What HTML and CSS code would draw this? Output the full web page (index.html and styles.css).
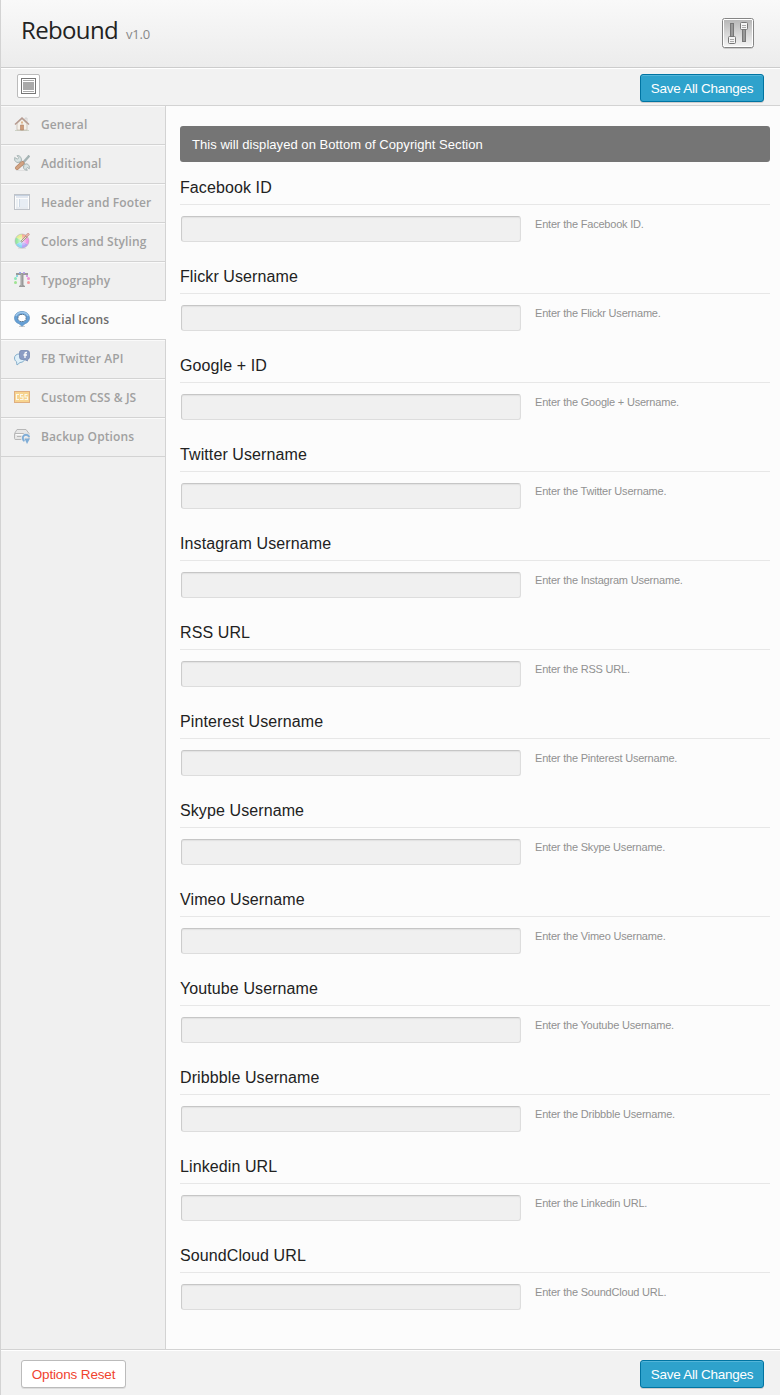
FILE: index.html
```html
<!DOCTYPE html>
<html lang="en">
<head>
<meta charset="utf-8">
<title>Rebound Options</title>
<link rel="stylesheet" href="styles.css">
</head>
<body>
<div class="panel">
  <header class="header">
    <h1 class="title">Rebound</h1><span class="version">v1.0</span>
    <svg class="sliders" width="32" height="32" viewBox="0 0 32 32">
      <defs>
        <linearGradient id="metal" x1="0" y1="0" x2="0" y2="1"><stop offset="0" stop-color="#b8b8b8"/><stop offset="1" stop-color="#f3f3f3"/></linearGradient>
      </defs>
      <rect x="1" y="2" width="30" height="29" rx="2" fill="#ccc"/>
      <rect x=".5" y=".5" width="31" height="29" rx="2" fill="#fff" stroke="#858585"/>
      <rect x="2" y="2" width="28" height="26" fill="url(#metal)"/>
      <rect x="8.500" y="5.500" width="3" height="14" fill="#999" stroke="#777"/>
      <rect x="6.500" y="18.500" width="7" height="7" rx="1" fill="#f4f4f4" stroke="#777"/>
      <path d="M8 21.500h4M8 23.500h4" stroke="#aaa"/>
      <rect x="20.500" y="10.500" width="3" height="13" fill="#999" stroke="#777"/>
      <rect x="18.500" y="4.500" width="7" height="7" rx="1" fill="#f4f4f4" stroke="#777"/>
      <path d="M20 7.500h4M20 9.500h4" stroke="#aaa"/>
    </svg>
  </header>
  <div class="toolbar">
    <a class="expand"><svg width="15" height="16" viewBox="0 0 15 16"><rect x=".5" y=".5" width="14" height="15" fill="#fff" stroke="#777"/><path d="M2 2.500h11M2 13.500h11" stroke="#aaa"/><rect x="2" y="4" width="11" height="8" fill="#aaa"/></svg></a>
    <button class="btn primary">Save All Changes</button>
  </div>
  <div class="main">
    <nav class="nav">
      <a class="item"><svg class="icon" viewBox="0 0 16 16"><path d="M1 14.500h14" stroke="#c5ccbd"/><path d="M3 7.500 8 3l5 4.500V14H3z" fill="#f7f1e8" stroke="#b9a99b" stroke-width=".7"/><path d="M11 2h2v4h-2z" fill="#eee" stroke="#aaa" stroke-width=".5"/><path d="M1 8.500 8 2l7 6.500" fill="none" stroke="#a88577" stroke-width="1.500"/><path d="M6.500 9h3v5h-3z" fill="#c78859" stroke="#9d6546" stroke-width=".6"/><path d="M7 5.500h2v2H7z" fill="#d9aa78"/></svg><span>General</span></a>
      <a class="item"><svg class="icon" viewBox="0 0 16 16"><path d="M2 15.500h11" stroke="#ddd"/><path d="m5 5 7 7" stroke="#8fa0a0" stroke-width="3.500"/><path d="m5 5 7 7" stroke="#dae5e3" stroke-width="2"/><path d="M.7 2.500v3L3 7.500l3-.5 1.500-1.800L7 2.500 5 .7H3l1.800 2-1.300 1.500zM10 9.500l3-.7 2.300 2v3l-2-1.300-1 1 1 1.800-2.500-.6L9.500 13z" fill="#d4e0df" stroke="#8fa0a0" stroke-width=".9"/><path d="m9 7 4.500-5 1-1.500 1 1-1.500 1.500L9.500 8" fill="#dce5e5" stroke="#93a5a6" stroke-width="1.200"/><path d="m3 13 5.500-5" stroke="#a96e48" stroke-width="4" stroke-linecap="round"/><path d="m3 13 5.500-5" stroke="#cb9168" stroke-width="2.500" stroke-linecap="round"/></svg><span>Additional</span></a>
      <a class="item"><svg class="icon" viewBox="0 0 16 16"><rect x=".5" y=".5" width="15" height="15" fill="#fff" stroke="#b3b8c0"/><path d="M1 1.500h14" stroke="#b9c8da"/><path d="M2 2h12v2H2z" fill="#dfe6ef"/><path d="M2 5h2v8H2z" fill="#eaf0f6"/><path d="M5.500 5v8" stroke="#c4d1e0"/><path d="M6 5h8v8H6z" fill="#e6edf5"/><path d="M2 14h12" stroke="#ccd6e2"/></svg><span>Header and Footer</span></a>
      <a class="item"><svg class="icon" viewBox="0 0 16 16"><path d="M4 15.500h8" stroke="#ddd"/><g><path d="M8 8V1A7 7 0 0 0 2 4.500z" fill="#e3f07c"/><path d="M8 8 2 4.500a7 7 0 0 0 0 7z" fill="#7fe88e"/><path d="m8 8-6 3.500A7 7 0 0 0 8 15z" fill="#72d4f5"/><path d="M8 8v7a7 7 0 0 0 6-3.500z" fill="#a792fa"/><path d="m8 8 6 3.500A7 7 0 0 0 14 4.500z" fill="#f27fe0"/><path d="m8 8 6-3.500A7 7 0 0 0 8 1z" fill="#fba283"/></g><circle cx="8" cy="8" r="4.500" fill="#fff" opacity=".25"/><circle cx="8" cy="8" r="2.500" fill="#fff" opacity=".4"/><circle cx="8" cy="8" r="7" fill="none" stroke="#999ba5" stroke-width=".5"/><path d="m7 9 6-6" stroke="#777" stroke-width="1.800"/><path d="m7.500 8.500 5-5" stroke="#f8e9b4"/><path d="m12 3.500 3-3" stroke="#c98277" stroke-width="2.500"/><path d="m12.500 3 2-2" stroke="#f5c8bb"/></svg><span>Colors and Styling</span></a>
      <a class="item"><svg class="icon" viewBox="0 0 16 16"><path d="M2 1h12v3h-1l-1-1H9.500v10l1.500 1v1H5v-1l1.500-1V3H4L3 4H2z" fill="#858585"/><path d="M7.500 2v12" stroke="#999"/><path d="M5 0h2v1.500H5z" fill="#7f95ef"/><path d="M9 0h2v1.500H9z" fill="#b08fee"/><path d="M2 3h2v2H2z" fill="#76cfe0"/><circle cx="1.500" cy="6.500" r="1.500" fill="#78e4ad"/><circle cx="1.500" cy="10.500" r="1.500" fill="#8be27a"/><path d="M12 3h2v2h-2z" fill="#cc8be4"/><circle cx="14.500" cy="6.500" r="1.500" fill="#f07fc6"/><circle cx="14.500" cy="10.500" r="1.500" fill="#f98585"/></svg><span>Typography</span></a>
      <a class="item active"><svg class="icon" viewBox="0 0 16 16"><path d="M5 15.500h6" stroke="#ccc"/><path d="M8 .5C4 .5.500 3.200.500 7c0 3 2 5 4.500 5.700L8 15.300l3-2.600c2.500-.7 4.500-2.700 4.500-5.700C15.500 3.200 12 .5 8 .5z" fill="#659fd5" stroke="#5b8fbd" stroke-width=".7"/><path d="M2 5C3 2.500 5.200 1.500 8 1.500s5 1 6 3.500" fill="none" stroke="#9dc6e9" stroke-width="1.500"/><path d="M6 3.500h4l2 2v3l-2 2H6l-2-2v-3z" fill="#fff" stroke="#60798f" stroke-width="1" stroke-dasharray="2 .6"/></svg><span>Social Icons</span></a>
      <a class="item"><svg class="icon" viewBox="0 0 16 16"><path d="M5 4C2.500 4 .5 5.700.5 8c0 1.600.8 3 2 3.700L3 15l3-2.500c3 0 5-2 5-4.500S8.500 4 5 4z" fill="#dcf1fc" stroke="#6c9fc3"/><path d="M7 .5h6Q15.500.5 15.500 3v4q0 2-2 2.500V11l-3-1.500H8Q5.500 9.500 5.500 7V3Q5.500.5 7 .5z" fill="#7288b8" stroke="#5971a4" stroke-width=".8"/><path d="M13 2.500h-1q-1 0-1 1V8M9.500 5h3.500" fill="none" stroke="#fff" stroke-width="1.300"/></svg><span>FB Twitter API</span></a>
      <a class="item"><svg class="icon" viewBox="0 0 16 16"><rect x=".5" y="2.500" width="15" height="11" fill="#f9ce78" stroke="#dc9e65"/><path d="M5 5.500H2.500v5H5M9 5.500H6.500V8H9v2.500H6M13.500 5.500H11V8h2.500v2.500h-3" fill="none" stroke="#fffbea" stroke-width="1.100"/></svg><span>Custom CSS &amp; JS</span></a>
      <a class="item"><svg class="icon" viewBox="0 0 16 16"><path d="M3 1.500h9l3 4v5q0 1-1 1H2q-1.500 0-1.500-1V5.500z" fill="#e6e6e6" stroke="#aaa"/><path d="M1 5.500h13M3 8.500h6" stroke="#aaa"/><path d="M2 6.500h11" stroke="#fff"/><path d="M10.500 13A3.300 3.300 0 1 1 15.200 9" fill="none" stroke="#f0f0f0" stroke-width="3.500"/><path d="M10.500 13A3.300 3.300 0 1 1 15.200 9" fill="none" stroke="#659dd0" stroke-width="2"/><path d="M10.500 10.500H16L13 16z" fill="#659dd0"/></svg><span>Backup Options</span></a>
    </nav>
    <main class="content">
      <div class="info">This will displayed on Bottom of Copyright Section</div>
      <section class="field"><h2>Facebook ID</h2><div class="row"><input type="text"><p>Enter the Facebook ID.</p></div></section>
      <section class="field"><h2>Flickr Username</h2><div class="row"><input type="text"><p>Enter the Flickr Username.</p></div></section>
      <section class="field"><h2>Google + ID</h2><div class="row"><input type="text"><p>Enter the Google + Username.</p></div></section>
      <section class="field"><h2>Twitter Username</h2><div class="row"><input type="text"><p>Enter the Twitter Username.</p></div></section>
      <section class="field"><h2>Instagram Username</h2><div class="row"><input type="text"><p>Enter the Instagram Username.</p></div></section>
      <section class="field"><h2>RSS URL</h2><div class="row"><input type="text"><p>Enter the RSS URL.</p></div></section>
      <section class="field"><h2>Pinterest Username</h2><div class="row"><input type="text"><p>Enter the Pinterest Username.</p></div></section>
      <section class="field"><h2>Skype Username</h2><div class="row"><input type="text"><p>Enter the Skype Username.</p></div></section>
      <section class="field"><h2>Vimeo Username</h2><div class="row"><input type="text"><p>Enter the Vimeo Username.</p></div></section>
      <section class="field"><h2>Youtube Username</h2><div class="row"><input type="text"><p>Enter the Youtube Username.</p></div></section>
      <section class="field"><h2>Dribbble Username</h2><div class="row"><input type="text"><p>Enter the Dribbble Username.</p></div></section>
      <section class="field"><h2>Linkedin URL</h2><div class="row"><input type="text"><p>Enter the Linkedin URL.</p></div></section>
      <section class="field"><h2>SoundCloud URL</h2><div class="row"><input type="text"><p>Enter the SoundCloud URL.</p></div></section>
    </main>
  </div>
  <footer class="footer">
    <button class="btn reset">Options Reset</button>
    <button class="btn primary">Save All Changes</button>
  </footer>
</div>
</body>
</html>
```

FILE: styles.css
```css
* { box-sizing: border-box; }
body { margin: 0; background: #f1f1f1; font-family: "Liberation Sans", Arial, sans-serif; }
.panel { display: flex; flex-direction: column; height: 1395px; overflow: hidden; border-left: 1px solid #d3d3d3; }
.header { display: flex; align-items: baseline; height: 68px; padding: 13px 26px 0 20px; border-bottom: 1px solid #ccc; background: linear-gradient(#f9f9f9, #ececec); }
.title { margin: 0; font: 400 24px/34px "Open Sans", sans-serif; color: #222; letter-spacing: -.65px; }
.version { margin-left: 8px; font: 400 13px/20px "Open Sans", sans-serif; color: #888; letter-spacing: -.2px; }
.sliders { align-self: flex-start; margin: 5px 0 0 auto; }
.toolbar { display: flex; justify-content: space-between; align-items: flex-start; height: 38px; padding: 5px 16px 0; border-top: 1px solid #fff; border-bottom: 1px solid #d3d3d3; background: #f2f2f2; }
.expand { display: flex; align-items: center; justify-content: center; width: 23px; height: 24px; border: 1px solid #bbb; border-radius: 2px; background: #fff; }
.btn { padding: 1px 0 0; border-radius: 3px; font: 14px/20px "Liberation Sans", Arial, sans-serif; }
.primary { width: 124px; height: 28px; border: 1px solid #0074a2; background: #2ea2cc; box-shadow: inset 0 1px 0 rgba(120, 200, 230, .5), 0 1px 0 rgba(0, 0, 0, .15); color: #fff; font-size: 13.5px; letter-spacing: -.25px; }
.main { display: flex; height: 1243px; }
.nav { width: 165px; border-right: 1px solid #d3d3d3; background: #f0f0f0; }
.item { display: flex; align-items: center; gap: 11px; height: 39px; padding: 0 0 1px 13px; border-top: 1px solid #fafafa; border-bottom: 1px solid #d3d3d3; font: 550 12px/18px "Open Sans", sans-serif; letter-spacing: .1px; color: #a0a0a0; }
.icon { flex: none; width: 16px; height: 16px; margin-bottom: 2px; opacity: .8; }
.active { width: 165px; border-top-color: #fcfcfc; background: #fcfcfc; color: #6c6c6c; }
.active .icon { opacity: 1; }
.content { flex: 1; padding: 20px 10px 0 14px; background: #fcfcfc; }
.info { height: 36px; margin-bottom: 14px; padding: 0 12px; border-radius: 3px; background: #757575; color: #fff; font-size: 13px; letter-spacing: .05px; line-height: 37px; }
.field { height: 89px; }
.field h2 { height: 29px; margin: 0; border-bottom: 1px solid #e7e7e7; color: #222; font-size: 16px; font-weight: 400; letter-spacing: .1px; line-height: 24px; }
.row { display: flex; gap: 14px; padding: 11px 0 0 1px; }
.row input { width: 340px; height: 26px; border: 1px solid #ddd; border-top-color: #c6c6c6; border-left-color: #ccc; border-radius: 3px; background: #f0f0f0; box-shadow: inset 0 1px 1px #e2e2e2; }
.row p { margin: 0; padding-top: 1px; color: #919191; font-size: 11px; letter-spacing: -.2px; line-height: 15px; }
.footer { display: flex; flex: 1; align-items: flex-start; justify-content: space-between; padding: 10px 16px 0 20px; border-top: 1px solid #d3d3d3; background: #f2f2f2; box-shadow: inset 0 1px #fff; }
.reset { width: 105px; height: 28px; border: 1px solid #bbb; background: #fff; color: #f0432f; box-shadow: 0 1px 0 #ddd; font-size: 13.5px; letter-spacing: -.15px; }
```
